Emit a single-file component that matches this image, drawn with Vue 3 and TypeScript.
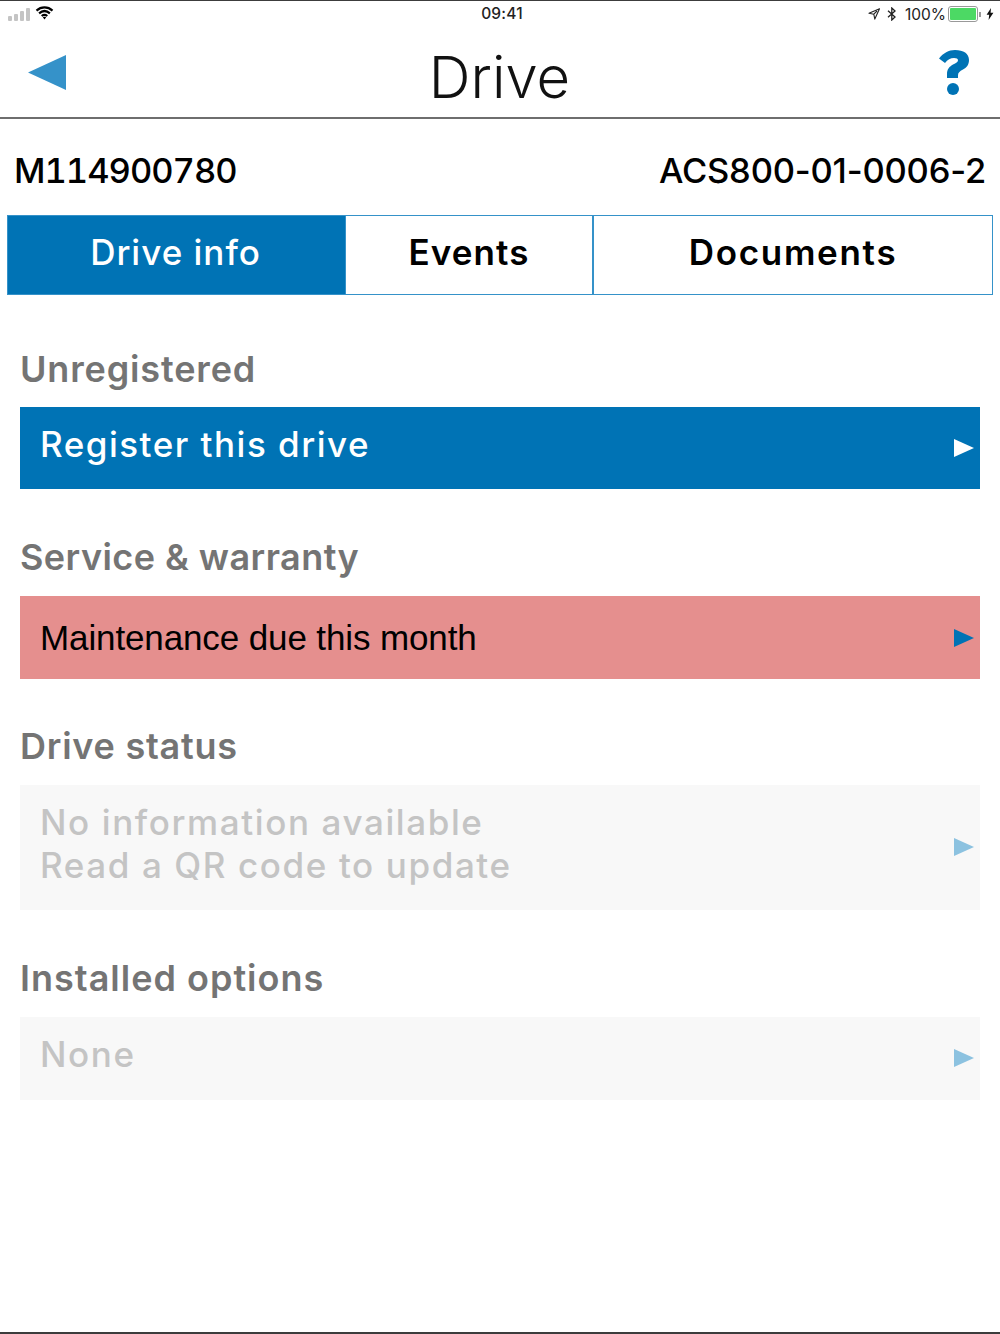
<script setup lang="ts">
interface Row { label: string; lines: string[]; kind: string }
const rows: Row[] = [
  { label: 'Unregistered', lines: ['Register this drive'], kind: 'blue' },
  { label: 'Service & warranty', lines: ['Maintenance due this month'], kind: 'red' },
  { label: 'Drive status', lines: ['No information available', 'Read a QR code to update'], kind: 'off tall' },
  { label: 'Installed options', lines: ['None'], kind: 'off' },
]
</script>

<template>
  <div class="page">
    <div class="status">
      <div class="st-left">
        <svg width="23" height="13" viewBox="0 0 23 13" class="signal">
          <rect x="0" y="8" width="4" height="5" rx="1" />
          <rect x="6" y="6" width="4" height="7" rx="1" />
          <rect x="12" y="3" width="4" height="10" rx="1" />
          <rect x="18" y="0" width="4" height="13" rx="1" />
        </svg>
        <svg width="19" height="14" viewBox="0 0 18 14" class="wifi">
          <path d="M1 4.600C5.700.4 12.300.4 17 4.600M3.600 7.400c3.400-3 7.400-3 10.800 0M6.200 10c1.800-1.500 3.800-1.500 5.600 0" fill="none" stroke="#000" stroke-width="2.200" />
          <path d="M7.300 11.200 9 13.400l1.700-2.200c-1-.7-2.400-.7-3.400 0z" fill="#000" />
        </svg>
      </div>
      <span class="clock">09:41</span>
      <div class="st-right">
        <svg width="12" height="12" viewBox="0 0 12 12"><path d="M11.500.8 1 5.200l4.800 1 1 4.900z M9 3 5.800 6.200" fill="none" stroke="#222" stroke-width="1.100" stroke-linejoin="round" /></svg>
        <svg width="10" height="14" viewBox="0 0 10 14" class="bt"><path d="M1 3.800 8 10 4.800 13V1L8 4 1 10.200" fill="none" stroke="#222" stroke-width="1.300" /></svg>
        <span class="pct">100%</span>
        <span class="battery"><i></i></span>
        <span class="nub"></span>
        <svg width="8" height="12" viewBox="0 0 8 12" class="bolt"><path d="M5 0 .6 6.800h2.600L2.600 12 7.400 4.800H4.600z" fill="#111" /></svg>
      </div>
    </div>

    <header class="nav">
      <svg class="back" width="38" height="36" viewBox="0 0 38 36"><path d="M0 17.500 38 0v35z" fill="#3592c9" /></svg>
      <h1>Drive</h1>
      <svg class="help" width="30" height="45" viewBox="0 0 30 45">
        <path d="M0 8.500C4.500 3 9.500 0 16 0c8.500 0 14 3.500 14 10 0 5-2.500 7.500-6 9.500-3.500 2-5 3-5 6V28H8v-4c0-5 2.500-7.500 6-9.500 3-1.700 5-2.600 5-4.300C19 8.700 17.500 8 15 8c-3.500 0-6.500 1.800-9 5z" fill="#0073b5" />
        <circle cx="14" cy="39" r="6" fill="#0073b5" />
      </svg>
    </header>

    <div class="ids">
      <span class="serial">M114900780</span>
      <span class="model">ACS800-01-0006-2</span>
    </div>

    <div class="tabs">
      <div class="tab t1 active">Drive info</div>
      <div class="tab t2">Events</div>
      <div class="tab t3">Documents</div>
    </div>

    <section v-for="r in rows" :key="r.label" class="sec">
      <h2>{{ r.label }}</h2>
      <div class="row" :class="r.kind">
        <div class="txt"><div v-for="l in r.lines" :key="l">{{ l }}</div></div>
        <svg class="arrow" width="20" height="18" viewBox="0 0 20 18"><path d="M0 0 20 9 0 18z" /></svg>
      </div>
    </section>
  </div>
</template>

<style>
html, body { margin: 0; background: #fff; }
</style>

<style scoped>
.page {
  width: 1000px; height: 1334px; box-sizing: border-box; overflow: hidden;
  background: #fff; border-top: 1px solid #3c3c3c; border-bottom: 2px solid #3c3c3c;
  font-family: Inter, "Liberation Sans", sans-serif; display: flex; flex-direction: column;
}
.status { height: 26px; display: flex; align-items: center; justify-content: space-between; padding: 0 6px 0 8px; position: relative; }
.st-left { display: flex; align-items: center; gap: 4px; }
.signal { fill: #c4c4c4; }
.wifi { margin-top: -2px; }
.clock { position: absolute; left: 0; right: 0; text-align: center; padding-left: 4px; margin-top: -1px; font-size: 15.500px; font-weight: 500; letter-spacing: .2px; color: #222; }
.st-right { display: flex; align-items: center; gap: 0; color: #222; }
.st-right .bt { margin-left: 7px; }
.pct { margin-left: 8px; font-size: 15.500px; }
.battery { margin-left: 2px; width: 26px; height: 12px; padding: 1px; border: 1px solid #999; border-radius: 3px; display: block; box-sizing: content-box; }
.battery i { display: block; height: 100%; background: #4cd964; border-radius: 1px; }
.nub { width: 2px; height: 5px; background: #999; margin-left: 1px; }
.bolt { margin-left: 5px; }

.nav { height: 92px; box-sizing: border-box; border-bottom: 2px solid #6e6e6e; display: flex; align-items: center; justify-content: space-between; padding: 0 31px 0 28px; position: relative; }
.back { margin-top: 2px; }
.help { margin-top: 0; }
.nav h1 { position: absolute; left: 0; right: 0; top: 15px; margin: 0; padding-right: 1px; text-align: center; font-size: 58px; line-height: 70px; font-weight: 300; color: #111; }

.ids { height: 96px; box-sizing: border-box; padding: 30px 14px 0; display: flex; justify-content: space-between; line-height: 44px; font-size: 34.500px; font-weight: 500; color: #000; }
.serial { font-variant-numeric: tabular-nums; letter-spacing: -1px; }
.model { letter-spacing: -.2px; }

.tabs { margin: 0 7px; height: 80px; display: flex; box-sizing: border-box; border: 1.500px solid #3592c9; }
.tab { display: flex; align-items: center; justify-content: center; box-sizing: border-box; font-size: 35px; font-weight: 600; color: #000; padding-bottom: 6px; }
.t1 { width: 337px; font-weight: 500; letter-spacing: 1px; padding-right: 2px; }
.t2 { width: 249px; border-left: 1.500px solid #3592c9; border-right: 2px solid #3592c9; letter-spacing: 1.100px; }
.t3 { flex: 1; letter-spacing: 1.700px; }
.tab.active { background: #0073b5; color: #fff; }

.sec { margin: 46px 20px 0; }
.sec h2 { margin: 0; font-size: 36px; line-height: 44px; font-weight: 600; letter-spacing: .85px; color: #747474; }
.sec:nth-of-type(1) { margin-top: 52px; }
.sec:nth-of-type(2) h2 { letter-spacing: .45px; }
.sec:nth-of-type(3) { margin-top: 45px; }
.sec:nth-of-type(3) h2 { letter-spacing: .75px; }
.sec:nth-of-type(4) h2 { letter-spacing: 1px; }
.row { margin-top: 17px; min-height: 83px; padding: 0 6px 0 20px; display: flex; align-items: center; justify-content: space-between; font-size: 35px; line-height: 43px; font-weight: 400; }
.sec:nth-of-type(1) .row { margin-top: 16px; min-height: 82px; }
.row .arrow { fill: #0073b5; }
.row.blue { background: #0073b5; color: #fff; font-weight: 500; letter-spacing: 1.500px; }
.row.blue .txt { margin-top: -8px; }
.row.blue .arrow { fill: #fff; }
.row.red { background: #e58f8e; color: #000; font-family: "Liberation Sans", Arial, sans-serif; letter-spacing: -.12px; }
.row.off { background: #f8f8f8; color: #c4c4c4; font-weight: 500; letter-spacing: 1.600px; }
.row.off .txt { margin-top: -8px; }
.row.off .arrow { fill: #8cc2e0; margin-top: -1px; }
.row.tall { min-height: 125px; }
</style>
